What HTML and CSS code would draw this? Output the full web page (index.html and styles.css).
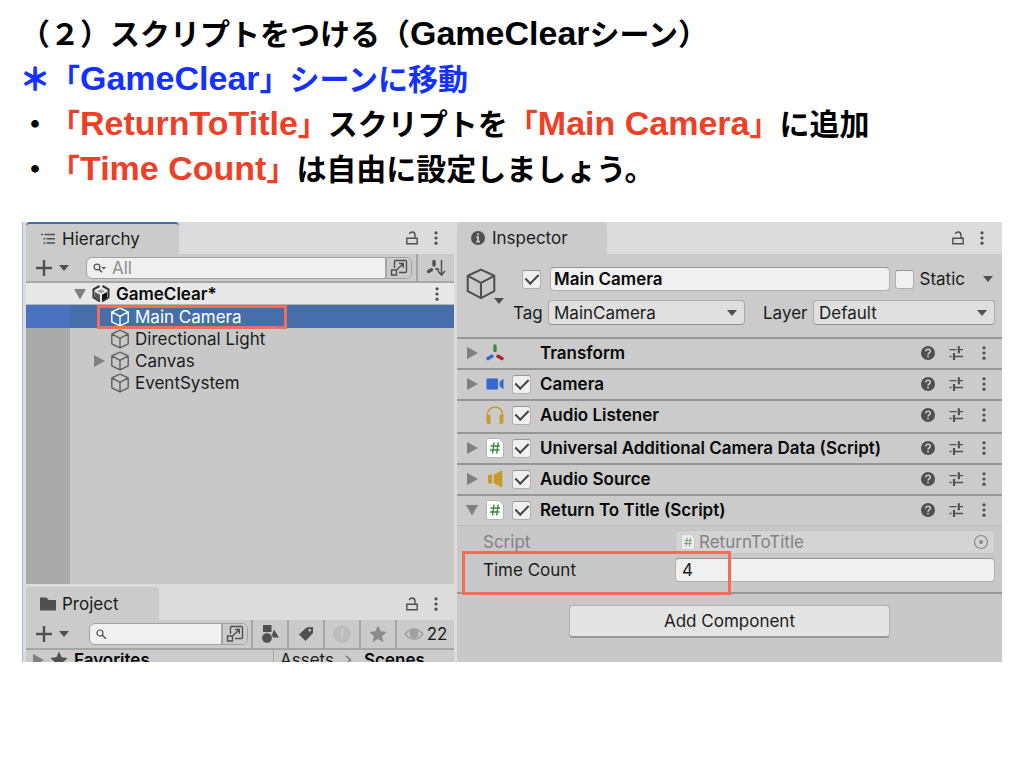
FILE: index.html
```html
<!DOCTYPE html>
<html lang="ja">
<head>
<meta charset="utf-8">
<meta name="viewport" content="width=device-width, initial-scale=1">
<title>スクリプトをつける（GameClearシーン）</title>
<link rel="stylesheet" href="styles.css">
</head>
<body>
<svg class="symbols" aria-hidden="true">
  <symbol id="lock" viewBox="0 0 14 16"><path d="M1.800 8.300h10.400v5.400H1.800zM10 8V5.200C10 3 8.800 2 7.200 2S4.700 2.700 4.300 4" fill="none" stroke="currentColor" stroke-width="1.400"/></symbol>
  <symbol id="dots" viewBox="0 0 6 16"><g fill="currentColor"><circle cx="3" cy="2.800" r="1.600"/><circle cx="3" cy="8" r="1.600"/><circle cx="3" cy="13.200" r="1.600"/></g></symbol>
  <symbol id="plus" viewBox="0 0 18 18"><path d="M9 1v16M1 9h16" stroke="currentColor" stroke-width="2.400"/></symbol>
  <symbol id="down" viewBox="0 0 12 12"><path d="M1 3h10L6 9z" fill="currentColor"/></symbol>
  <symbol id="fold-open" viewBox="0 0 12 12"><path d="M0 1h12L6 11.500z" fill="currentColor"/></symbol>
  <symbol id="fold-closed" viewBox="0 0 12 12"><path d="M1 0l11 6L1 12z" fill="currentColor"/></symbol>
  <symbol id="cube" viewBox="0 0 20 20"><path d="M10 1.200l8.200 3.600v10L10 18.900l-8.200-4.100v-10zM1.800 4.900L10 9.300l8.200-4.400M10 9.300v9.500" fill="none" stroke="currentColor" stroke-width="1.400" stroke-linejoin="round"/></symbol>
  <symbol id="expand" viewBox="0 0 18 18"><path d="M4.500 9V2.500q0-1 1-1h10q1 0 1 1v10q0 1-1 1H9M1.500 11h5v5h-5zM7 10.500L13 5M9 4.500h4.300v4.300" fill="none" stroke="currentColor" stroke-width="1.400"/></symbol>
  <symbol id="search" viewBox="0 0 16 16"><circle cx="5" cy="7" r="3" fill="none" stroke="currentColor" stroke-width="1.200"/><path d="M7.200 9.300l3.800 3.500" stroke="currentColor" stroke-width="1.500"/></symbol>
  <symbol id="search-menu" viewBox="0 0 16 16"><circle cx="5" cy="7" r="2.900" fill="none" stroke="currentColor" stroke-width="1.300"/><path d="M7 9.300l3 3" stroke="currentColor" stroke-width="1.500"/><path d="M9.500 7h4.500l-2.200 2.500z" fill="currentColor"/></symbol>
  <symbol id="help" viewBox="0 0 14 14"><circle cx="7" cy="7" r="7" fill="currentColor"/><path d="M4.700 5.400C4.800 2.500 9.300 2.600 9.300 5.200 9.300 6.900 7 6.900 7 8.700M7 9.800v1.700" fill="none" stroke="#cbcbcb" stroke-width="1.600"/></symbol>
  <symbol id="sliders" viewBox="0 0 16 14"><path d="M1.500 3.700h7M11 3.700h4M1.500 10.500h2M7 10.500h8" stroke="currentColor" stroke-width="1.300"/><path d="M10.800.2v7M6 7v7" stroke="currentColor" stroke-width="2.200"/></symbol>
  <symbol id="script" viewBox="0 0 18 20"><path d="M2 .5h11l4.500 4.500v13q0 1.500-1.500 1.500H2Q.5 19.500.5 18V2Q.5.500 2 .5z" fill="#fff" stroke="#b5b5b5"/><path d="M8 4.500L6.500 15.500M12.200 4.500l-1.500 11M4.500 8h9.500M4 12h9.500" stroke="#3c8a3c" stroke-width="1.400"/></symbol>
  <symbol id="star" viewBox="0 0 18 18"><path d="M9 .5l2.600 5.800 6 .6-4.500 4.200 1.300 6.100L9 14l-5.400 3.200 1.300-6.100L.4 6.900l6-.6z" fill="currentColor"/></symbol>
</svg>

<main class="slide">
  <header class="notes">
    <h1>（２）スクリプトをつける（<span class="latin">GameClear</span>シーン）</h1>
    <p class="blue"><span class="asterisk">＊</span>「<span class="latin">GameClear</span>」シーンに移動</p>
    <p>・<span class="red">「<span class="latin">ReturnToTitle</span>」</span>スクリプトを<span class="red">「<span class="latin">Main Camera</span>」</span>に追加</p>
    <p>・<span class="red">「<span class="latin">Time Count</span>」</span>は自由に設定しましょう。</p>
  </header>

  <div class="editor">
    <div class="left">
      <section class="hierarchy" aria-label="Hierarchy">
        <div class="tabbar">
          <h2 class="tab focused"><svg class="i16" viewBox="0 0 16 16"><path d="M4.500 3.500H15M6.500 7.700H15M6.500 12H15M1 3.500h2M3.500 7.700h1.800M3.500 12h1.800" stroke="currentColor" stroke-width="1.400"/></svg>Hierarchy</h2>
          <div class="tab-tools"><button aria-label="Lock"><svg class="lock"><use href="#lock"/></svg></button><button aria-label="Menu"><svg class="dots"><use href="#dots"/></svg></button></div>
        </div>
        <div class="toolbar">
          <button class="add" aria-label="Create"><svg class="i18"><use href="#plus"/></svg><svg class="i12"><use href="#down"/></svg></button>
          <div class="search"><svg class="i16"><use href="#search-menu"/></svg><input type="text" placeholder="All" aria-label="Search hierarchy"><button aria-label="Expand search"><svg class="i18"><use href="#expand"/></svg></button></div>
          <button class="tool" aria-label="Sort"><svg class="i20" viewBox="0 0 20 20"><path d="M8 3.500v3.500" stroke="currentColor" stroke-width="3.400" stroke-linecap="round"/><path d="M2.500 13.500l3-1.700" stroke="currentColor" stroke-width="3.400" stroke-linecap="round"/><path d="M9.500 10.500l3.500 1.500" stroke="currentColor" stroke-width="2"/><path d="M15.500 2v14.500M12 13l3.500 4 3.500-4" fill="none" stroke="currentColor" stroke-width="1.500"/></svg></button>
        </div>
        <div class="tree">
          <div class="node scene"><svg class="i12 fold"><use href="#fold-open"/></svg><svg class="i18" viewBox="0 0 18 18"><path d="M7.500 1L1.500 4.300v8.200L8 16.500M10.500 1l6 3.300v8.200L10 16.500" fill="none" stroke="#333" stroke-width="2"/><path d="M9 4.200l4.500 2.300L9 9 4.500 6.500z" fill="#999"/><path d="M3 7l5 2.700v6L3 12.700z" fill="#555"/><path d="M15 7l-5 2.700v6l5-3z" fill="#111"/><path d="M9 9v8M9 9L3 5.800M9 9l6-3.200" stroke="#e8e8e8" stroke-width="1.200"/></svg><strong>GameClear*</strong><button aria-label="Scene menu"><svg class="dots"><use href="#dots"/></svg></button></div>
          <div class="node selected"><svg class="i20"><use href="#cube"/></svg><span>Main Camera</span><i class="mark mark-object"></i></div>
          <div class="node"><svg class="i20"><use href="#cube"/></svg><span>Directional Light</span></div>
          <div class="node"><svg class="i12 fold"><use href="#fold-closed"/></svg><svg class="i20"><use href="#cube"/></svg><span>Canvas</span></div>
          <div class="node"><svg class="i20"><use href="#cube"/></svg><span>EventSystem</span></div>
        </div>
      </section>

      <section class="project" aria-label="Project">
        <div class="tabbar">
          <h2 class="tab"><svg class="i18" viewBox="0 0 18 18"><path d="M1 2.500h6.500L9.500 5H17v10.500H1z" fill="currentColor"/></svg>Project</h2>
          <div class="tab-tools"><button aria-label="Lock"><svg class="lock"><use href="#lock"/></svg></button><button aria-label="Menu"><svg class="dots"><use href="#dots"/></svg></button></div>
        </div>
        <div class="toolbar">
          <button class="add" aria-label="Create"><svg class="i18"><use href="#plus"/></svg><svg class="i12"><use href="#down"/></svg></button>
          <div class="search"><svg class="i16"><use href="#search"/></svg><input type="text" aria-label="Search project"><button aria-label="Expand search"><svg class="i18"><use href="#expand"/></svg></button></div>
          <button class="tool" aria-label="Filter by type"><svg class="i18" viewBox="0 0 18 18"><path d="M2 0h8.500v7H2zM13 4.500l5 8h-8z" fill="currentColor"/><circle cx="6" cy="13" r="5.400" fill="currentColor" stroke="#cbcbcb"/></svg></button>
          <button class="tool" aria-label="Filter by label"><svg class="i16" viewBox="0 0 16 16"><path d="M1 8.500L8.500 1.500 15 1v6L7.500 15z" fill="currentColor"/><circle cx="11.800" cy="4.200" r="1.300" fill="#cbcbcb"/></svg></button>
          <button class="tool faint" aria-label="Warnings"><svg class="i18" viewBox="0 0 18 18"><circle cx="9" cy="9" r="9" fill="currentColor"/><path d="M9 4v6.500M9 12v2" stroke="#cbcbcb" stroke-width="2"/></svg></button>
          <button class="tool dim" aria-label="Favorites"><svg class="i18"><use href="#star"/></svg></button>
          <button class="tool hidden-count" aria-label="Hidden packages: 22"><svg class="i20" viewBox="0 0 20 20"><path d="M1 10Q10 0 19 10 10 20 1 10z" fill="none" stroke="#a0a0a0" stroke-width="1.400"/><circle cx="10" cy="9.500" r="4.500" fill="#a0a0a0"/></svg>22</button>
        </div>
        <div class="browser">
          <div class="favorites"><svg class="i12 fold"><use href="#fold-closed"/></svg><svg class="i18"><use href="#star"/></svg><strong>Favorites</strong></div>
          <div class="crumbs"><span>Assets</span><svg class="i12" viewBox="0 0 12 12"><path d="M3 2l4.500 4L3 10" fill="none" stroke="#777" stroke-width="1.500"/></svg><strong>Scenes</strong></div>
        </div>
      </section>
    </div>

    <section class="inspector" aria-label="Inspector">
      <div class="tabbar">
        <h2 class="tab"><svg class="i14" viewBox="0 0 14 14"><circle cx="7" cy="7" r="7" fill="currentColor"/><path d="M7 2.300v2M5.200 6H7v4.500M5 10.700h4" fill="none" stroke="#cbcbcb" stroke-width="1.700"/></svg>Inspector</h2>
        <div class="tab-tools"><button aria-label="Lock"><svg class="lock"><use href="#lock"/></svg></button><button aria-label="Menu"><svg class="dots"><use href="#dots"/></svg></button></div>
      </div>

      <div class="object">
        <button class="object-icon" aria-label="Select icon"><svg class="i32" viewBox="0 0 20 20"><path d="M10 1l8.300 3.800v9.700L10 18.800l-8.300-4.300V4.800zM1.800 4.900L10 9.300l8.200-4.400M10 9.300v9.500" fill="none" stroke="currentColor" stroke-width="1.300" stroke-linejoin="round"/></svg><svg class="i12"><use href="#down"/></svg></button>
        <div class="object-fields">
          <div class="name-row">
            <input type="checkbox" class="check" checked aria-label="Active">
            <input type="text" class="field name" value="Main Camera" aria-label="Name">
            <label class="static"><input type="checkbox" class="check">Static</label>
            <button class="static-menu" aria-label="Static options"><svg class="i12"><use href="#down"/></svg></button>
          </div>
          <div class="tag-row">
            <label for="tag">Tag</label>
            <div class="select tag"><select id="tag"><option>MainCamera</option></select><svg class="i12"><use href="#down"/></svg></div>
            <label for="layer">Layer</label>
            <div class="select"><select id="layer"><option>Default</option></select><svg class="i12"><use href="#down"/></svg></div>
          </div>
        </div>
      </div>

      <div class="component">
        <svg class="i12 fold"><use href="#fold-closed"/></svg>
        <svg class="i18" viewBox="0 0 18 18"><path d="M9 2v4.500" stroke="#3f8a3f" stroke-width="3.400" stroke-linecap="round"/><path d="M2 14.500l4-2.200" stroke="#2f6bd0" stroke-width="3.400" stroke-linecap="round"/><path d="M12 12.300l4 2.200" stroke="#b02020" stroke-width="3.400" stroke-linecap="round"/></svg>
        <span></span><h3>Transform</h3>
        <div class="actions"><button aria-label="Help"><svg class="i14"><use href="#help"/></svg></button><button aria-label="Presets"><svg class="i16"><use href="#sliders"/></svg></button><button aria-label="Menu"><svg class="dots"><use href="#dots"/></svg></button></div>
      </div>
      <div class="component">
        <svg class="i12 fold"><use href="#fold-closed"/></svg>
        <svg class="i18" viewBox="0 0 18 18"><path d="M1.500 3.500H11q1 0 1 1v9q0 1-1 1H1.500q-1 0-1-1v-9q0-1 1-1zM13.500 7L17.500 3.500v11L13.500 11z" fill="#2f6bd0"/></svg>
        <input type="checkbox" class="check" checked aria-label="Camera enabled"><h3>Camera</h3>
        <div class="actions"><button aria-label="Help"><svg class="i14"><use href="#help"/></svg></button><button aria-label="Presets"><svg class="i16"><use href="#sliders"/></svg></button><button aria-label="Menu"><svg class="dots"><use href="#dots"/></svg></button></div>
      </div>
      <div class="component spaced">
        <span></span>
        <svg class="i18" viewBox="0 0 18 18"><path d="M1.500 10V8.500C1.500-1.500 16.500-1.500 16.500 8.500V10" fill="none" stroke="#c89a2c" stroke-width="1.500"/><path d="M.5 9h4v9h-2q-2 0-2-2zM13.500 9h4v7q0 2-2 2h-2z" fill="#c89a2c"/></svg>
        <input type="checkbox" class="check" checked aria-label="Audio Listener enabled"><h3>Audio Listener</h3>
        <div class="actions"><button aria-label="Help"><svg class="i14"><use href="#help"/></svg></button><button aria-label="Presets"><svg class="i16"><use href="#sliders"/></svg></button><button aria-label="Menu"><svg class="dots"><use href="#dots"/></svg></button></div>
      </div>
      <div class="component">
        <svg class="i12 fold"><use href="#fold-closed"/></svg>
        <svg class="doc"><use href="#script"/></svg>
        <input type="checkbox" class="check" checked aria-label="Universal Additional Camera Data enabled"><h3>Universal Additional Camera Data (Script)</h3>
        <div class="actions"><button aria-label="Help"><svg class="i14"><use href="#help"/></svg></button><button aria-label="Presets"><svg class="i16"><use href="#sliders"/></svg></button><button aria-label="Menu"><svg class="dots"><use href="#dots"/></svg></button></div>
      </div>
      <div class="component">
        <svg class="i12 fold"><use href="#fold-closed"/></svg>
        <svg class="i18" viewBox="0 0 18 18"><path d="M3.500 4.500H6v9H3.500q-1.500 0-1.500-1.500V6q0-1.500 1.500-1.500zM7.500 5L15.500.5q.8 0 .8 1v15q0 1-.8 1L7.500 13z" fill="#c89a2c"/></svg>
        <input type="checkbox" class="check" checked aria-label="Audio Source enabled"><h3>Audio Source</h3>
        <div class="actions"><button aria-label="Help"><svg class="i14"><use href="#help"/></svg></button><button aria-label="Presets"><svg class="i16"><use href="#sliders"/></svg></button><button aria-label="Menu"><svg class="dots"><use href="#dots"/></svg></button></div>
      </div>
      <div class="component">
        <svg class="i12 fold"><use href="#fold-open"/></svg>
        <svg class="doc"><use href="#script"/></svg>
        <input type="checkbox" class="check" checked aria-label="Return To Title enabled"><h3>Return To Title (Script)</h3>
        <div class="actions"><button aria-label="Help"><svg class="i14"><use href="#help"/></svg></button><button aria-label="Presets"><svg class="i16"><use href="#sliders"/></svg></button><button aria-label="Menu"><svg class="dots"><use href="#dots"/></svg></button></div>
      </div>
      <div class="properties">
        <div class="property disabled"><label for="script-ref">Script</label>
          <div class="reference"><svg class="doc-small"><use href="#script"/></svg><input type="text" id="script-ref" value="ReturnToTitle" disabled><svg class="i16" viewBox="0 0 16 16"><circle cx="8" cy="8" r="6.500" fill="none" stroke="#8a8a8a" stroke-width="1.200"/><circle cx="8" cy="8" r="2" fill="#8a8a8a"/></svg></div></div>
        <div class="property"><label for="time-count">Time Count</label><input type="text" id="time-count" class="field" value="4"></div>
        <i class="mark mark-property"></i>
      </div>
      <div class="footer"><button class="add-component">Add Component</button></div>
    </section>
  </div>
</main>
</body>
</html>
```
FILE: styles.css
```css
* { box-sizing: border-box; }
body { margin: 0; background: #fff; color: #1c1c1c; font-family: Inter, "Noto Sans CJK JP", sans-serif; font-size: 17px; line-height: 20px; }
h1, h2, h3, p { margin: 0; font: inherit; }
button, input, select { font: inherit; color: inherit; margin: 0; padding: 0; border: 0; background: none; }
button { display: flex; align-items: center; justify-content: center; color: #505050; }
svg { display: block; flex: none; color: #505050; }
strong { font-weight: 600; color: #080808; }
.symbols { position: absolute; width: 0; height: 0; }
.i12 { width: 12px; height: 12px; }
.i14 { width: 14px; height: 14px; }
.i16 { width: 16px; height: 16px; }
.i18 { width: 18px; height: 18px; }
.i20 { width: 20px; height: 20px; }
.i32 { width: 32px; height: 32px; }
.lock { width: 14px; height: 16px; }
.dots { width: 6px; height: 16px; }
.doc { width: 18px; height: 20px; }
.doc-small { width: 14px; height: 16px; opacity: .6; }
.fold { color: #808080; }

.slide { padding: 10px 22px; }
.notes { margin: 0 -2px 32px; font: 700 30px/45px "Noto Sans CJK JP", sans-serif; color: #000; text-spacing-trim: space-all; }
.latin { font-family: "Liberation Sans", sans-serif; font-size: 34px; line-height: 1; }
.asterisk { -webkit-text-stroke: 1px currentColor; }
.blue { color: #1432ff; }
.red { color: #ee4026; }

.editor { display: grid; grid-template-columns: minmax(0, 432fr) minmax(0, 545fr); gap: 3px; background: #dcdcdc; overflow: hidden; }
.left { display: flex; flex-direction: column; padding-left: 3px; border-left: 1px solid #a9bad2; }
.hierarchy { flex: 1; display: flex; flex-direction: column; }
.tabbar { display: flex; justify-content: space-between; height: 32px; background: #dcdcdc; }
.tab { display: flex; align-items: center; gap: 6px; width: 153px; padding-left: 14px; background: #cbcbcb; border-radius: 4px 4px 0 0; }
.focused { border-top: 2px solid #3d6eb4; }
.tab-tools { display: flex; align-items: center; gap: 14px; padding-right: 15px; }
.inspector .tab-tools { padding-right: 17px; }
.toolbar { display: flex; align-items: center; height: 30px; background: #cbcbcb; border-bottom: 2px solid #a6a6a6; }
.hierarchy .toolbar { height: 29px; }
.add { gap: 5px; padding-left: 9px; width: 60px; justify-content: flex-start; }
.search { flex: 1; min-width: 0; display: flex; align-items: center; height: 22px; margin-right: 4px; padding-left: 5px; background: #f0f0f0; border: 1px solid #a2a2a2; border-radius: 6px; overflow: hidden; }
.search input { flex: 1; min-width: 0; padding-left: 4px; }
.search input::placeholder { color: #8d8d8d; opacity: 1; }
.search button { flex: none; width: 26px; height: 20px; background: #cbcbcb; border-left: 2px solid #a6a6a6; }
.tool { flex: none; width: 38px; height: 28px; border-left: 2px solid #a6a6a6; }
.faint svg { color: #bdbdbd; }
.dim svg { color: #8b8b8b; }

.tree { flex: 1; background: linear-gradient(90deg, #aaa 44px, #c8c8c8 44px); }
.node { position: relative; display: flex; align-items: center; gap: 5px; height: 22px; padding-left: 84px; }
.node .i20 { color: #606060; }
.node .fold { margin-left: -17px; }
.node.scene { padding-left: 65px; background: #e8e8e8; border-bottom: 1px solid #b4b4b4; gap: 6px; }
.scene button { margin-left: auto; padding-right: 14px; }
.selected { height: 23px; color: #fff; background: linear-gradient(90deg, #4a72c0 44px, #466eab 44px); }
.node.selected .i20 { color: #fff; }
.mark { position: absolute; border: 3px solid #f26c59; pointer-events: none; }
.mark-object { left: 71px; top: 0; width: 190px; height: 24px; }

.project .tabbar { height: 36px; padding-top: 3px; }
.project .tab { width: 133px; gap: 5px; padding-left: 13px; }
.project .add { width: 63px; }
.project .search { margin-right: 3px; }
.project .tool { width: 36px; }
.project .hidden-count { width: 59px; gap: 3px; color: #1c1c1c; }
.browser { display: grid; grid-template-columns: 247fr 181fr; height: 12px; overflow: hidden; background: #cbcbcb; }
.favorites, .crumbs { display: flex; align-items: center; height: 20px; gap: 6px; padding-left: 6px; }
.crumbs { gap: 9px; border-left: 1px solid #a6a6a6; }

.inspector { background: #c8c8c8; }
.inspector .tab { width: 150px; gap: 7px; }
.object { display: flex; height: 83px; padding: 13px 7px 0 8px; background: #cbcbcb; }
.object-icon { align-self: flex-start; align-items: flex-end; width: 48px; justify-content: flex-start; height: 40px; padding-bottom: 7px; }
.object-icon .i12 { margin: 0 0 -7px -4px; }
.object-fields { flex: 1; min-width: 0; display: grid; gap: 9px; align-content: start; }
.name-row { display: flex; align-items: center; padding-left: 9px; }
.check { appearance: none; flex: none; display: grid; place-items: center; width: 19px; height: 19px; background: #f0f0f0; border: 1px solid #b0b0b0; border-top-color: #969696; border-radius: 3px; }
.check:checked::after { content: ""; width: 6px; height: 11px; margin-top: -3px; border: solid #444; border-width: 0 2px 2px 0; transform: rotate(45deg); }
.field { min-width: 0; height: 24px; padding: 0 6px; background: #f0f0f0; border: 1px solid #b0b0b0; border-top-color: #969696; border-radius: 4px; }
.name { flex: 1; margin: 0 5px 0 9px; padding: 0 3px; font-weight: 600; color: #080808; }
.static { display: flex; align-items: center; gap: 6px; }
.static-menu { margin: 0 1px 0 17px; }
.tag-row { display: grid; grid-template-columns: 35px minmax(0, 215fr) 50px minmax(0, 182fr); align-items: center; }
.select { display: grid; align-items: center; }
.tag { margin-right: 18px; }
.select select, .select svg { grid-area: 1 / 1; }
.select select { appearance: none; width: 100%; height: 25px; padding: 0 24px 0 5px; background: #dfdfdf; border: 1px solid #aaa; border-bottom-color: #919191; border-radius: 4px; }
.select svg { justify-self: end; margin-right: 7px; pointer-events: none; }

.component { display: grid; grid-template-columns: 12px 18px 19px 1fr auto; align-items: center; height: 31px; column-gap: 8px; padding: 0 4px 1px 9px; background: #cbcbcb; border-top: 2px solid #969696; }
.component h3 { padding-left: 1px; font-weight: 600; color: #080808; white-space: nowrap; }
.component .i18, .component .doc { justify-self: center; }
.spaced { height: 33px; padding-bottom: 3px; }
.actions { display: grid; grid-template-columns: repeat(3, 28px); align-items: center; }
.properties { position: relative; display: grid; gap: 4px; padding: 4px 7px 10px 26px; border-top: 1px solid #bdbdbd; border-bottom: 2px solid #969696; }
.property { display: grid; grid-template-columns: minmax(0, 192fr) minmax(0, 320fr); align-items: center; }
.disabled { color: #838383; }
.reference { display: flex; align-items: center; gap: 4px; height: 24px; padding: 0 5px; background: #d4d4d4; border: 1px solid #c2c2c2; border-radius: 4px; }
.reference input { flex: 1; min-width: 0; }
.mark-property { left: 5px; right: 271px; top: 25px; bottom: -3px; }
.footer { display: flex; justify-content: center; padding: 11px 0 24px; }
.add-component { width: 59%; height: 33px; background: #e4e4e4; border: 1px solid #b0b0b0; border-bottom: 2px solid #999; border-radius: 4px; color: #1c1c1c; }
```
